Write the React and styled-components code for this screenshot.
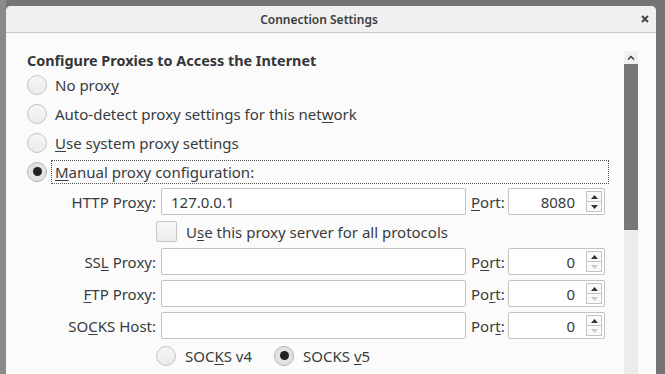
import styled, { createGlobalStyle } from "styled-components";

const GlobalStyle = createGlobalStyle`
  html, body {
    margin: 0;
    padding: 0;
    background: #747474;
    overflow: hidden;
  }
  * { box-sizing: border-box; }
`

const Screen = styled.div`
  width: 665px;
  height: 374px;
  display: flex;
  padding: 6px 9px 0 6px;
  background: linear-gradient(to right, #8a8a8a 0, #8a8a8a 6px, #747474 6px);
  font-family: "Noto Sans", "Open Sans", sans-serif;
  color: #383c3e;
`

const Dialog = styled.div`
  flex: 1;
  display: flex;
  flex-direction: column;
  background: #fbfbfb;
  border-radius: 5px 5px 0 0;
  overflow: hidden;
`

const TitleBar = styled.div`
  height: 27px;
  flex: none;
  display: flex;
  align-items: center;
  background: #f0f0f0;
  border-bottom: 1px solid #c8c8c8;
  padding: 0 3px 0 8px;
`

const Title = styled.div`
  flex: 1;
  margin-right: 13px;
  text-align: center;
  font-size: 12px;
  font-weight: 600;
  color: #3a3d3f;
`

const CloseButton = styled.div`
  width: 16px;
  height: 16px;
  display: flex;
  align-items: center;
  justify-content: center;
`

const Body = styled.div`
  flex: 1;
  display: flex;
  min-height: 0;
`

const Content = styled.div`
  flex: 1;
  padding: 18px 0 0 21px;
  display: flex;
  flex-direction: column;
`

const Heading = styled.div`
  font-size: 14.4px;
  font-weight: 700;
  line-height: 19px;
  color: #333638;
`

const RadioRow = styled.div`
  height: 29px;
  display: flex;
  align-items: center;
  gap: 8px;
  font-size: 15px;
  padding-right: 16px;
`

const RadioMark = styled.span`
  width: 20px;
  height: 20px;
  flex: none;
  border-radius: 50%;
  border: 1px solid ${(p) => (p.$on ? "#b6b6b6" : "#c3c3c3")};
  background: ${(p) => (p.$on ? "#e2e2e2" : "linear-gradient(#f6f6f6, #ebebeb)")};
  display: flex;
  align-items: center;
  justify-content: center;
  &::after {
    content: "";
    width: 9px;
    height: 9px;
    border-radius: 50%;
    background: #222;
    display: ${(p) => (p.$on ? "block" : "none")};
  }
`

const RadioLabel = styled.span`
  flex: ${(p) => (p.$focus ? 1 : "none")};
  padding: 1px 3px;
  margin-left: -3px;
  outline: ${(p) => (p.$focus ? "1px dotted #555" : "none")};
  outline-offset: 0;
  line-height: 20px;
`

const U = styled.u`
  text-decoration-thickness: 1px;
  text-underline-offset: 2px;
`

const ProxyGrid = styled.div`
  margin-top: 2px;
  display: grid;
  grid-template-columns: 130px 305px 32px 97px;
  grid-template-rows: 27px 23px 27px 27px 27px 23px;
  column-gap: 5px;
  row-gap: 5px;
  align-items: center;
  font-size: 15px;
  margin-left: -1px;
`

const FieldLabel = styled.div`
  text-align: ${(p) => (p.$left ? "left" : "right")};
  white-space: nowrap;
`

const TextField = styled.div`
  height: 27px;
  border: 1px solid #c2c2c2;
  border-radius: 2px;
  background: #ffffff;
  display: flex;
  align-items: center;
  padding: 0 9px;
  justify-content: ${(p) => (p.$right ? "flex-end" : "flex-start")};
`

const SpinBox = styled(TextField)`
  padding: 0 2px 0 8px;
  gap: 11px;
`

const SpinButtons = styled.div`
  width: 16px;
  height: 21px;
  border: 1px solid #c4c4c4;
  display: flex;
  flex-direction: column;
  background: #fafafa;
`

const SpinHalf = styled.div`
  flex: 1;
  display: flex;
  align-items: center;
  justify-content: center;
  & + & { border-top: 1px solid #c4c4c4; }
  color: ${(p) => (p.$off ? "#c8c8c8" : "#333")};
`

const WideRow = styled.div`
  grid-column: 2 / -1;
  margin-left: -5px;
  display: flex;
  align-items: center;
  gap: 9px;
`

const CheckMark = styled.span`
  width: 21px;
  height: 21px;
  border: 1px solid #c6c6c6;
  border-radius: 2px;
  background: linear-gradient(#f7f7f7, #ececec);
`

const RadioGroup = styled.div`
  grid-column: 2 / -1;
  margin-left: -5px;
  display: flex;
  align-items: center;
  gap: 9px;
`

const Spacer = styled.span`
  width: 4px;
`

const Scrollbar = styled.div`
  width: 14px;
  margin: 18px 18px 0 0;
  display: flex;
  flex-direction: column;
  background: #ececec;
`

const ScrollArrow = styled.div`
  height: 13px;
  background: #f0f0f0;
  display: flex;
  align-items: center;
  justify-content: center;
`

const ScrollThumb = styled.div`
  height: 166px;
  background: #777777;
`

function Radio({ on, focus, children }) {
  return (
    <RadioRow>
      <RadioMark $on={on} />
      <RadioLabel $focus={focus}>{children}</RadioLabel>
    </RadioRow>
  );
}

function Arrow({ down }) {
  return (
    <svg width="7" height="4" viewBox="0 0 7 4">
      <path d={down ? "M0 0 L7 0 L3.5 4 Z" : "M0 4 L7 4 L3.5 0 Z"} fill="currentColor" />
    </svg>
  );
}

function Port({ value, lowOff, label }) {
  return (
    <>
      <FieldLabel $left>{label}</FieldLabel>
      <SpinBox $right>
        {value}
        <SpinButtons>
          <SpinHalf><Arrow /></SpinHalf>
          <SpinHalf $off={lowOff}><Arrow down /></SpinHalf>
        </SpinButtons>
      </SpinBox>
    </>
  );
}

export default function App() {
  return (
    <Screen>
      <GlobalStyle />
      <Dialog>
        <TitleBar>
          <Title>Connection Settings</Title>
          <CloseButton>
            <svg width="8" height="8" viewBox="0 0 8 8">
              <path d="M1 1 L7 7 M7 1 L1 7" stroke="#444" strokeWidth="2" />
            </svg>
          </CloseButton>
        </TitleBar>
        <Body>
          <Content>
            <Heading>Configure Proxies to Access the Internet</Heading>
            <Radio>No prox<U>y</U></Radio>
            <Radio>Auto-detect proxy settings for this net<U>w</U>ork</Radio>
            <Radio><U>U</U>se system proxy settings</Radio>
            <Radio on focus><U>M</U>anual proxy configuration:</Radio>
            <ProxyGrid>
              <FieldLabel>HTTP Pro<U>x</U>y:</FieldLabel>
              <TextField>127.0.0.1</TextField>
              <Port value="8080" label={<><U>P</U>ort:</>} />

              <WideRow>
                <CheckMark />
                <span>U<U>s</U>e this proxy server for all protocols</span>
              </WideRow>

              <FieldLabel>SS<U>L</U> Proxy:</FieldLabel>
              <TextField />
              <Port value="0" lowOff label={<>P<U>o</U>rt:</>} />

              <FieldLabel><U>F</U>TP Proxy:</FieldLabel>
              <TextField />
              <Port value="0" lowOff label={<>Po<U>r</U>t:</>} />

              <FieldLabel>SO<U>C</U>KS Host:</FieldLabel>
              <TextField />
              <Port value="0" lowOff label={<>Por<U>t</U>:</>} />

              <RadioGroup>
                <RadioMark />
                <span>SOC<U>K</U>S v4</span>
                <Spacer />
                <RadioMark $on />
                <span>SOCKS <U>v</U>5</span>
              </RadioGroup>
            </ProxyGrid>
          </Content>
          <Scrollbar>
            <ScrollArrow>
              <svg width="8" height="5" viewBox="0 0 8 5">
                <path d="M1 4.5 L4 1.5 L7 4.5" stroke="#333" strokeWidth="1.4" fill="none" />
              </svg>
            </ScrollArrow>
            <ScrollThumb />
          </Scrollbar>
        </Body>
      </Dialog>
    </Screen>
  );
}
